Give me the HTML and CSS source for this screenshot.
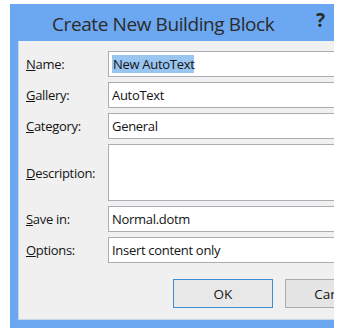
FILE: index.html
```html
<!DOCTYPE html>
<html>
<head>
<meta charset="utf-8">
<link rel="stylesheet" href="styles.css">
</head>
<body>
<div class="screen">
  <div class="clip">
    <div class="dialog">
      <div class="titlebar">
        <span class="title">Create New Building Block</span>
        <span class="help">?</span>
      </div>
      <div class="client">
        <div class="form">
          <label class="label"><u>N</u>ame:</label>
          <div class="field"><span class="sel">New AutoText</span></div>
          <label class="label"><u>G</u>allery:</label>
          <div class="field">AutoText</div>
          <label class="label"><u>C</u>ategory:</label>
          <div class="field">General</div>
          <label class="label"><u>D</u>escription:</label>
          <div class="field tall"></div>
          <label class="label"><u>S</u>ave in:</label>
          <div class="field">Normal.dotm</div>
          <label class="label"><u>O</u>ptions:</label>
          <div class="field">Insert content only</div>
        </div>
        <div class="buttons">
          <button class="btn default">OK</button>
          <button class="btn">Cancel</button>
        </div>
      </div>
    </div>
  </div>
</div>
</body>
</html>
```

FILE: styles.css
```css
html, body {
  margin: 0;
  padding: 0;
  background: #ffffff;
}
body {
  width: 344px;
  height: 336px;
  overflow: hidden;
  font-family: "Open Sans", "Noto Sans", "Liberation Sans", sans-serif;
}
.screen {
  padding: 4px 0 0 10px;
}
.clip {
  width: 324px;
  height: 324px;
  overflow: hidden;
}
.dialog {
  width: 394px;
  background: #6ba8f1;
  padding: 0 8px 8px 8px;
  box-sizing: border-box;
}
.titlebar {
  height: 37px;
  display: flex;
  align-items: center;
  position: relative;
}
.title {
  padding-left: 34px;
  font-size: 19px;
  color: #2b2b2b;
  letter-spacing: -0.4px;
  margin-top: 2px;
}
.help {
  position: absolute;
  left: 298px;
  top: 3px;
  font-size: 19px;
  font-weight: bold;
  color: #2a2a2a;
}
.client {
  background: #f0f0f0;
  height: 279px;
  box-sizing: border-box;
  padding: 10px 10px 10px 7px;
  border: 1px solid #c9d6e6;
  border-top: none;
}
.form {
  display: grid;
  grid-template-columns: 82px 1fr;
  grid-template-rows: 26px 26px 26px 57px 26px 26px;
  row-gap: 5px;
  align-items: center;
}
.label {
  font-size: 13px;
  color: #141414;
  letter-spacing: -0.3px;
}
.field {
  height: 100%;
  box-sizing: border-box;
  border: 1px solid #abadb3;
  background: #ffffff;
  font-size: 13px;
  letter-spacing: -0.3px;
  color: #141414;
  display: flex;
  align-items: center;
  padding-left: 3px;
}
.sel {
  background: #99c5f1;
  padding: 0 0 0 1px;
  line-height: 18px;
}
.buttons {
  display: flex;
  justify-content: flex-end;
  gap: 12px;
  margin-top: 16px;
}
.btn {
  width: 100px;
  height: 29px;
  box-sizing: border-box;
  border: 1px solid #adadad;
  background: #e5e5e5;
  font-family: inherit;
  font-size: 13.5px;
  color: #141414;
  padding: 0;
}
.btn.default {
  border: 1px solid #3c8fd6;
  background: #e8e8e8;
}
```
